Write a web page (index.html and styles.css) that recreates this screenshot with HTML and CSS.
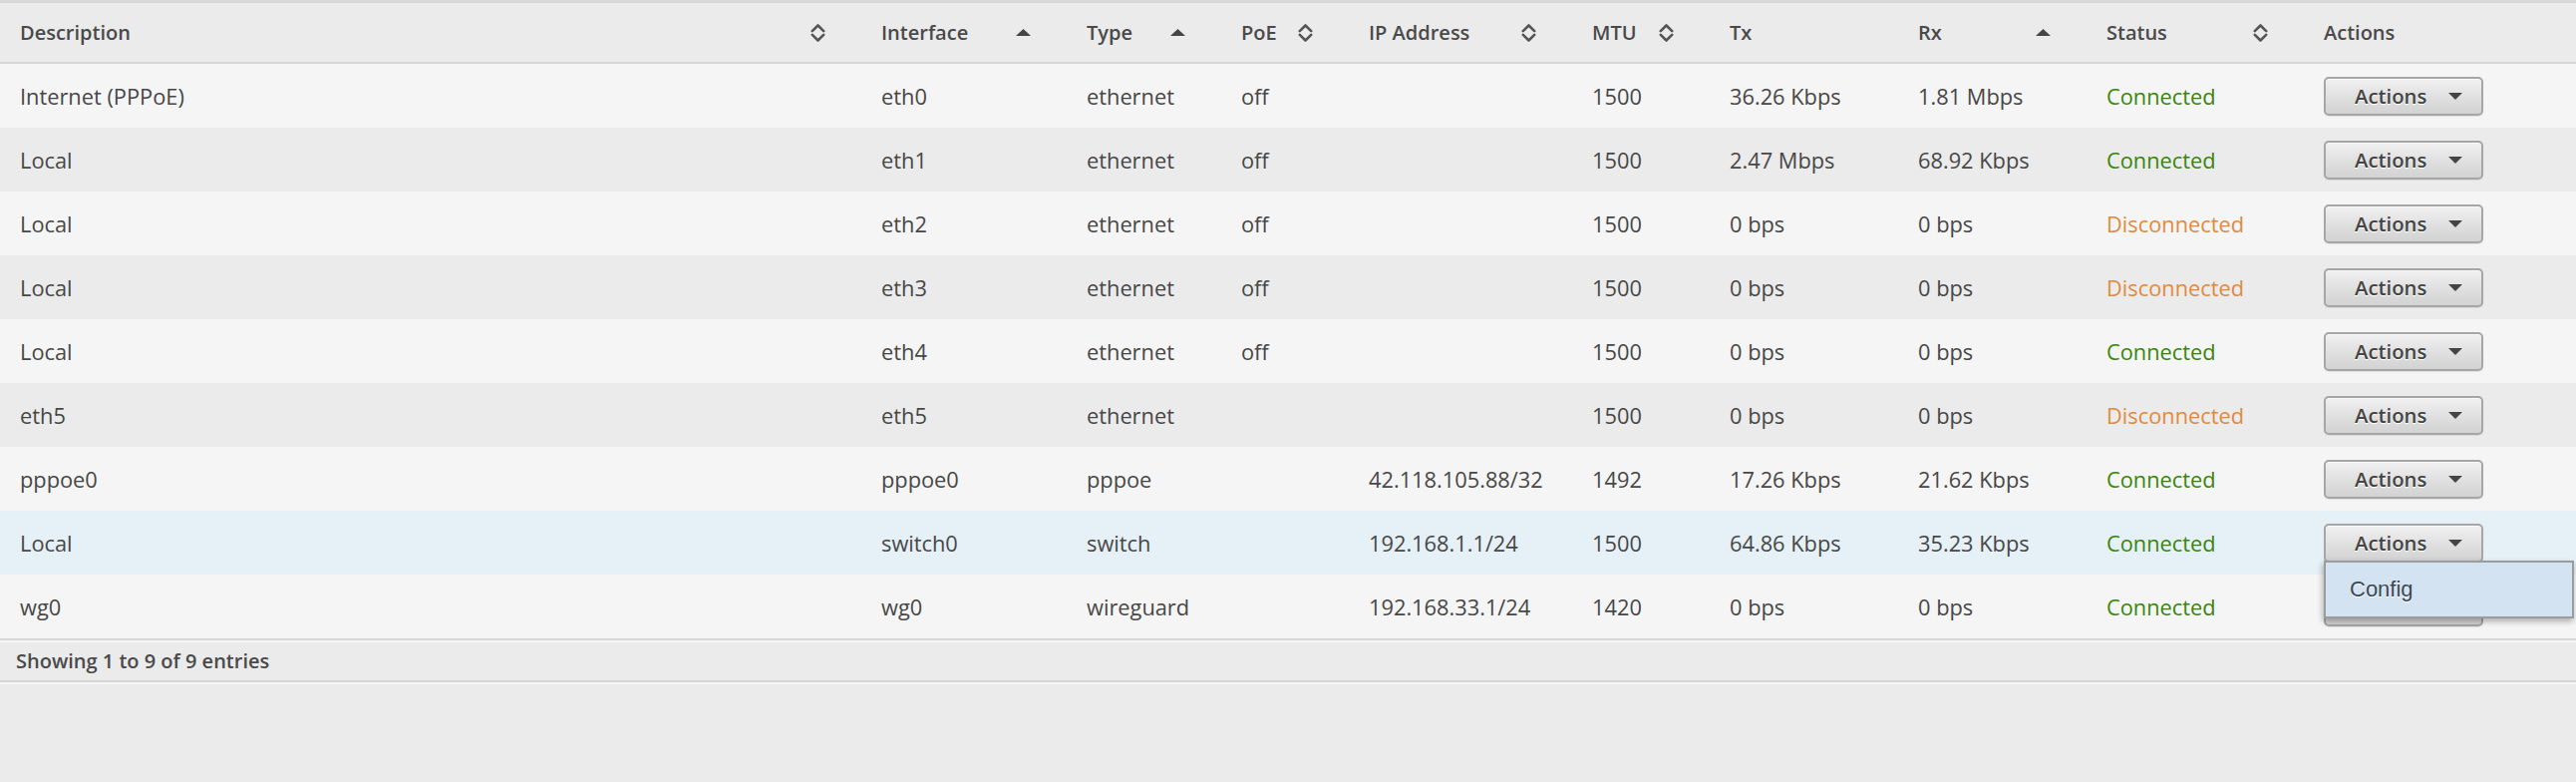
FILE: index.html
```html
<!DOCTYPE html>
<html>
<head>
<meta charset="utf-8">
<link rel="stylesheet" href="styles.css">
</head>
<body>
<div class="grid">
  <table class="ifaces">
    <colgroup>
      <col class="c-desc"><col class="c-iface"><col class="c-type"><col class="c-poe"><col class="c-ip"><col class="c-mtu"><col class="c-tx"><col class="c-rx"><col class="c-status"><col class="c-actions">
    </colgroup>
    <thead>
      <tr>
        <th><div class="th-in"><span>Description</span><svg class="sort-both" viewBox="0 0 15 20"><path d="M1.8 8.2 L7.5 2.5 L13.2 8.2 M1.8 11.8 L7.5 17.5 L13.2 11.8"/></svg></div></th>
        <th><div class="th-in"><span>Interface</span><svg class="sort-asc" viewBox="0 0 15 7"><path d="M0 7 L7.5 0 L15 7 Z"/></svg></div></th>
        <th><div class="th-in"><span>Type</span><svg class="sort-asc" viewBox="0 0 15 7"><path d="M0 7 L7.5 0 L15 7 Z"/></svg></div></th>
        <th><div class="th-in"><span>PoE</span><svg class="sort-both" viewBox="0 0 15 20"><path d="M1.8 8.2 L7.5 2.5 L13.2 8.2 M1.8 11.8 L7.5 17.5 L13.2 11.8"/></svg></div></th>
        <th><div class="th-in"><span>IP Address</span><svg class="sort-both" viewBox="0 0 15 20"><path d="M1.8 8.2 L7.5 2.5 L13.2 8.2 M1.8 11.8 L7.5 17.5 L13.2 11.8"/></svg></div></th>
        <th><div class="th-in"><span>MTU</span><svg class="sort-both" viewBox="0 0 15 20"><path d="M1.8 8.2 L7.5 2.5 L13.2 8.2 M1.8 11.8 L7.5 17.5 L13.2 11.8"/></svg></div></th>
        <th><div class="th-in"><span>Tx</span></div></th>
        <th><div class="th-in"><span>Rx</span><svg class="sort-asc" viewBox="0 0 15 7"><path d="M0 7 L7.5 0 L15 7 Z"/></svg></div></th>
        <th><div class="th-in"><span>Status</span><svg class="sort-both" viewBox="0 0 15 20"><path d="M1.8 8.2 L7.5 2.5 L13.2 8.2 M1.8 11.8 L7.5 17.5 L13.2 11.8"/></svg></div></th>
        <th><div class="th-in"><span>Actions</span></div></th>
      </tr>
    </thead>
    <tbody>
      <tr class="odd">
        <td>Internet (PPPoE)</td><td>eth0</td><td>ethernet</td><td>off</td><td></td><td>1500</td><td>36.26 Kbps</td><td>1.81 Mbps</td><td class="ok">Connected</td>
        <td><div class="act"><button class="btn">Actions<span class="caret"></span></button></div></td>
      </tr>
      <tr class="even">
        <td>Local</td><td>eth1</td><td>ethernet</td><td>off</td><td></td><td>1500</td><td>2.47 Mbps</td><td>68.92 Kbps</td><td class="ok">Connected</td>
        <td><div class="act"><button class="btn">Actions<span class="caret"></span></button></div></td>
      </tr>
      <tr class="odd">
        <td>Local</td><td>eth2</td><td>ethernet</td><td>off</td><td></td><td>1500</td><td>0 bps</td><td>0 bps</td><td class="bad">Disconnected</td>
        <td><div class="act"><button class="btn">Actions<span class="caret"></span></button></div></td>
      </tr>
      <tr class="even">
        <td>Local</td><td>eth3</td><td>ethernet</td><td>off</td><td></td><td>1500</td><td>0 bps</td><td>0 bps</td><td class="bad">Disconnected</td>
        <td><div class="act"><button class="btn">Actions<span class="caret"></span></button></div></td>
      </tr>
      <tr class="odd">
        <td>Local</td><td>eth4</td><td>ethernet</td><td>off</td><td></td><td>1500</td><td>0 bps</td><td>0 bps</td><td class="ok">Connected</td>
        <td><div class="act"><button class="btn">Actions<span class="caret"></span></button></div></td>
      </tr>
      <tr class="even">
        <td>eth5</td><td>eth5</td><td>ethernet</td><td></td><td></td><td>1500</td><td>0 bps</td><td>0 bps</td><td class="bad">Disconnected</td>
        <td><div class="act"><button class="btn">Actions<span class="caret"></span></button></div></td>
      </tr>
      <tr class="odd">
        <td>pppoe0</td><td>pppoe0</td><td>pppoe</td><td></td><td>42.118.105.88/32</td><td>1492</td><td>17.26 Kbps</td><td>21.62 Kbps</td><td class="ok">Connected</td>
        <td><div class="act"><button class="btn">Actions<span class="caret"></span></button></div></td>
      </tr>
      <tr class="hover">
        <td>Local</td><td>switch0</td><td>switch</td><td></td><td>192.168.1.1/24</td><td>1500</td><td>64.86 Kbps</td><td>35.23 Kbps</td><td class="ok">Connected</td>
        <td><div class="act"><button class="btn">Actions<span class="caret"></span></button>
          <ul class="menu"><li>Config</li></ul></div></td>
      </tr>
      <tr class="odd">
        <td>wg0</td><td>wg0</td><td>wireguard</td><td></td><td>192.168.33.1/24</td><td>1420</td><td>0 bps</td><td>0 bps</td><td class="ok">Connected</td>
        <td><div class="act"><button class="btn">Actions<span class="caret"></span></button></div></td>
      </tr>
    </tbody>
  </table>
  <div class="info">Showing 1 to 9 of 9 entries</div>
</div>
</body>
</html>
```

FILE: styles.css
```css
html, body {
  margin: 0;
  padding: 0;
  background: #ebebeb;
}
body {
  font-family: "Open Sans", "DejaVu Sans", sans-serif;
  color: #4a4a4a;
  width: 2584px;
  height: 784px;
  overflow: hidden;
}
.grid {
  border-top: 3px solid #d8d8d8;
}
.ifaces {
  width: 2584px;
  table-layout: fixed;
  border-collapse: separate;
  border-spacing: 0;
}
.c-desc { width: 864px; }
.c-iface { width: 206px; }
.c-type { width: 155px; }
.c-poe { width: 128px; }
.c-ip { width: 224px; }
.c-mtu { width: 138px; }
.c-tx { width: 189px; }
.c-rx { width: 189px; }
.c-status { width: 218px; }
.c-actions { width: 273px; }

.ifaces th {
  height: 59px;
  padding: 0 36px 0 20px;
  background: #ebebeb;
  border-bottom: 2px solid #d6d6d6;
  font-size: 20px;
  font-weight: 600;
  color: #4a4a4a;
  text-align: left;
  vertical-align: middle;
}
.th-in {
  display: flex;
  align-items: center;
  justify-content: space-between;
}
.sort-both {
  width: 15px;
  height: 20px;
  flex: none;
}
.sort-both path {
  fill: none;
  stroke: #555;
  stroke-width: 2.6;
  stroke-linecap: round;
  stroke-linejoin: round;
}
.sort-asc {
  width: 15px;
  height: 7px;
  flex: none;
}
.sort-asc path {
  fill: #454545;
}

.ifaces td {
  height: 64px;
  padding: 0 0 0 20px;
  font-size: 21.8px;
  color: #474747;
  vertical-align: middle;
  white-space: nowrap;
}
.odd td { background: #f5f5f5; }
.even td { background: #ebebeb; }
.hover td { background: #e6f0f7; }
.ifaces td.ok { color: #38860f; }
.ifaces td.bad { color: #e08a40; }

.act {
  position: relative;
  width: 160px;
}
.btn {
  display: flex;
  align-items: center;
  box-sizing: border-box;
  width: 160px;
  height: 39px;
  margin: 0;
  padding: 0 0 0 29px;
  border: 2px solid #a6a6a6;
  border-radius: 5px;
  background: linear-gradient(#f0f0f0, #d2d2d2);
  box-shadow: inset 0 1px 0 #fafafa, 0 1px 1px rgba(0,0,0,0.08);
  font-family: "Open Sans", "DejaVu Sans", sans-serif;
  font-size: 20.3px;
  font-weight: 600;
  color: #444;
  text-shadow: 0 1px 0 #fff;
}
.caret {
  width: 0;
  height: 0;
  margin-left: 22px;
  border-left: 7px solid transparent;
  border-right: 7px solid transparent;
  border-top: 7px solid #444;
}
.menu {
  position: absolute;
  left: 0;
  top: 37px;
  width: 251px;
  box-sizing: border-box;
  height: 58px;
  margin: 0;
  padding: 0;
  list-style: none;
  background: #d3e3f1;
  border: 2px solid #9c9c9c;
  box-shadow: -1px 3px 6px rgba(0,0,0,0.3);
  z-index: 5;
}
.menu li {
  display: flex;
  align-items: center;
  height: 100%;
  padding-left: 24px;
  font-family: "Liberation Sans", Arial, sans-serif;
  font-size: 22px;
  color: #384858;
  text-shadow: 0 1px 0 #fff;
}

.info {
  box-sizing: border-box;
  height: 44px;
  padding-left: 16px;
  display: flex;
  align-items: center;
  border-top: 2px solid #d6d6d6;
  border-bottom: 2px solid #d6d6d6;
  box-shadow: inset 0 2px 0 #f6f6f6, 0 2px 0 #f6f6f6;
  background: #ebebeb;
  font-size: 20px;
  font-weight: 600;
  color: #4a4a4a;
}
```
